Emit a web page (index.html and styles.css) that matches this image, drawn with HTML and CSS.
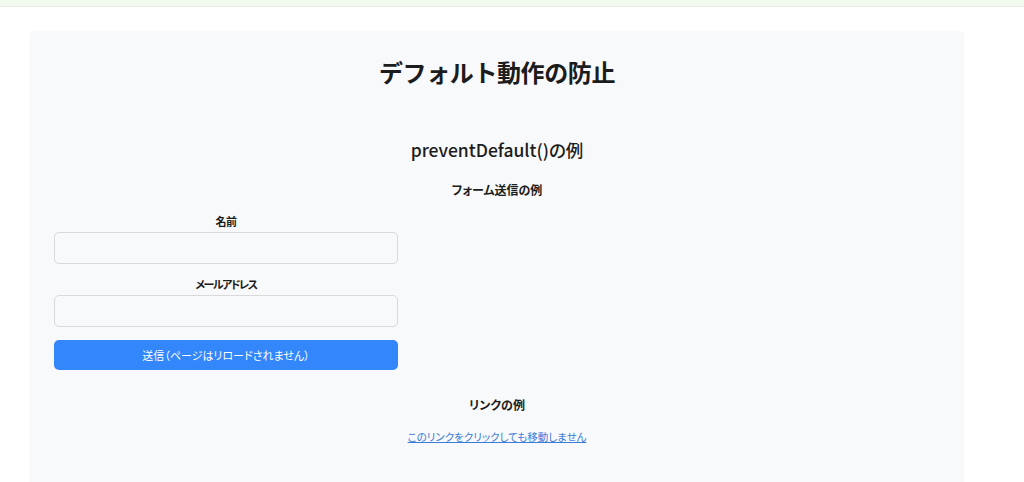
FILE: index.html
```html
<!DOCTYPE html>
<html lang="ja">
<head>
<meta charset="utf-8">
<title>デフォルト動作の防止</title>
<link rel="stylesheet" href="styles.css">
</head>
<body>
<div class="topbar"></div>
<main class="container">
  <h1 class="title">デフォルト動作の防止</h1>
  <h2 class="subtitle">preventDefault()の例</h2>
  <h3 class="section-title">フォーム送信の例</h3>
  <form class="form">
    <label class="label" for="name">名前</label>
    <input class="input" id="name" type="text">
    <label class="label label-second" for="email">メールアドレス</label>
    <input class="input" id="email" type="email">
    <button class="submit" type="submit">送信（ページはリロードされません）</button>
  </form>
  <h3 class="section-title section-link">リンクの例</h3>
  <p class="link-row"><a class="link" href="#">このリンクをクリックしても移動しません</a></p>
</main>
</body>
</html>
```
FILE: styles.css
```css
html, body {
  margin: 0;
  padding: 0;
  background: #ffffff;
}
body {
  font-family: "Noto Sans CJK JP", "Noto Sans", sans-serif;
  color: #1c1c1c;
  font-feature-settings: "palt";
}
.topbar {
  height: 6px;
  background: #f3faef;
  border-bottom: 1px solid #e9ede4;
}
.container {
  margin: 25px 0 0 31px;
  width: 932px;
  min-height: 460px;
  box-sizing: border-box;
  padding: 24px 23px 0;
  background: #f8f9fb;
  box-shadow: 0 0 3px rgba(0, 0, 0, 0.06);
}
.title {
  margin: 0;
  font-size: 24px;
  line-height: 32px;
  font-weight: 700;
  text-align: center;
  font-feature-settings: normal;
  letter-spacing: -0.4px;
}
.subtitle {
  margin: 49px 0 0;
  font-size: 17.5px;
  line-height: 26px;
  font-weight: 500;
  text-align: center;
}
.section-title {
  margin: 18px 0 0;
  font-size: 12px;
  line-height: 18px;
  font-weight: 700;
  text-align: center;
}
.form {
  width: 344px;
  display: flex;
  flex-direction: column;
}
.label {
  margin-top: 14px;
  font-size: 11px;
  line-height: 16px;
  font-weight: 700;
  text-align: center;
  letter-spacing: -0.5px;
}
.label-second {
  margin-top: 12px;
  letter-spacing: -1.5px;
}
.input {
  margin-top: 3px;
  height: 32px;
  box-sizing: border-box;
  border: 1px solid #d9d9d9;
  border-radius: 5px;
  background: #f8f9fb;
  font: inherit;
}
.submit {
  margin-top: 13px;
  height: 30px;
  border: none;
  border-radius: 5px;
  background: #3486fb;
  color: #ffffff;
  font-family: inherit;
  font-size: 11px;
  font-feature-settings: "palt";
}
.section-link {
  margin-top: 26px;
}
.link-row {
  margin: 15px 0 0;
  font-size: 10.5px;
  line-height: 16px;
  text-align: center;
}
.link {
  color: #3e7bd9;
}
```
